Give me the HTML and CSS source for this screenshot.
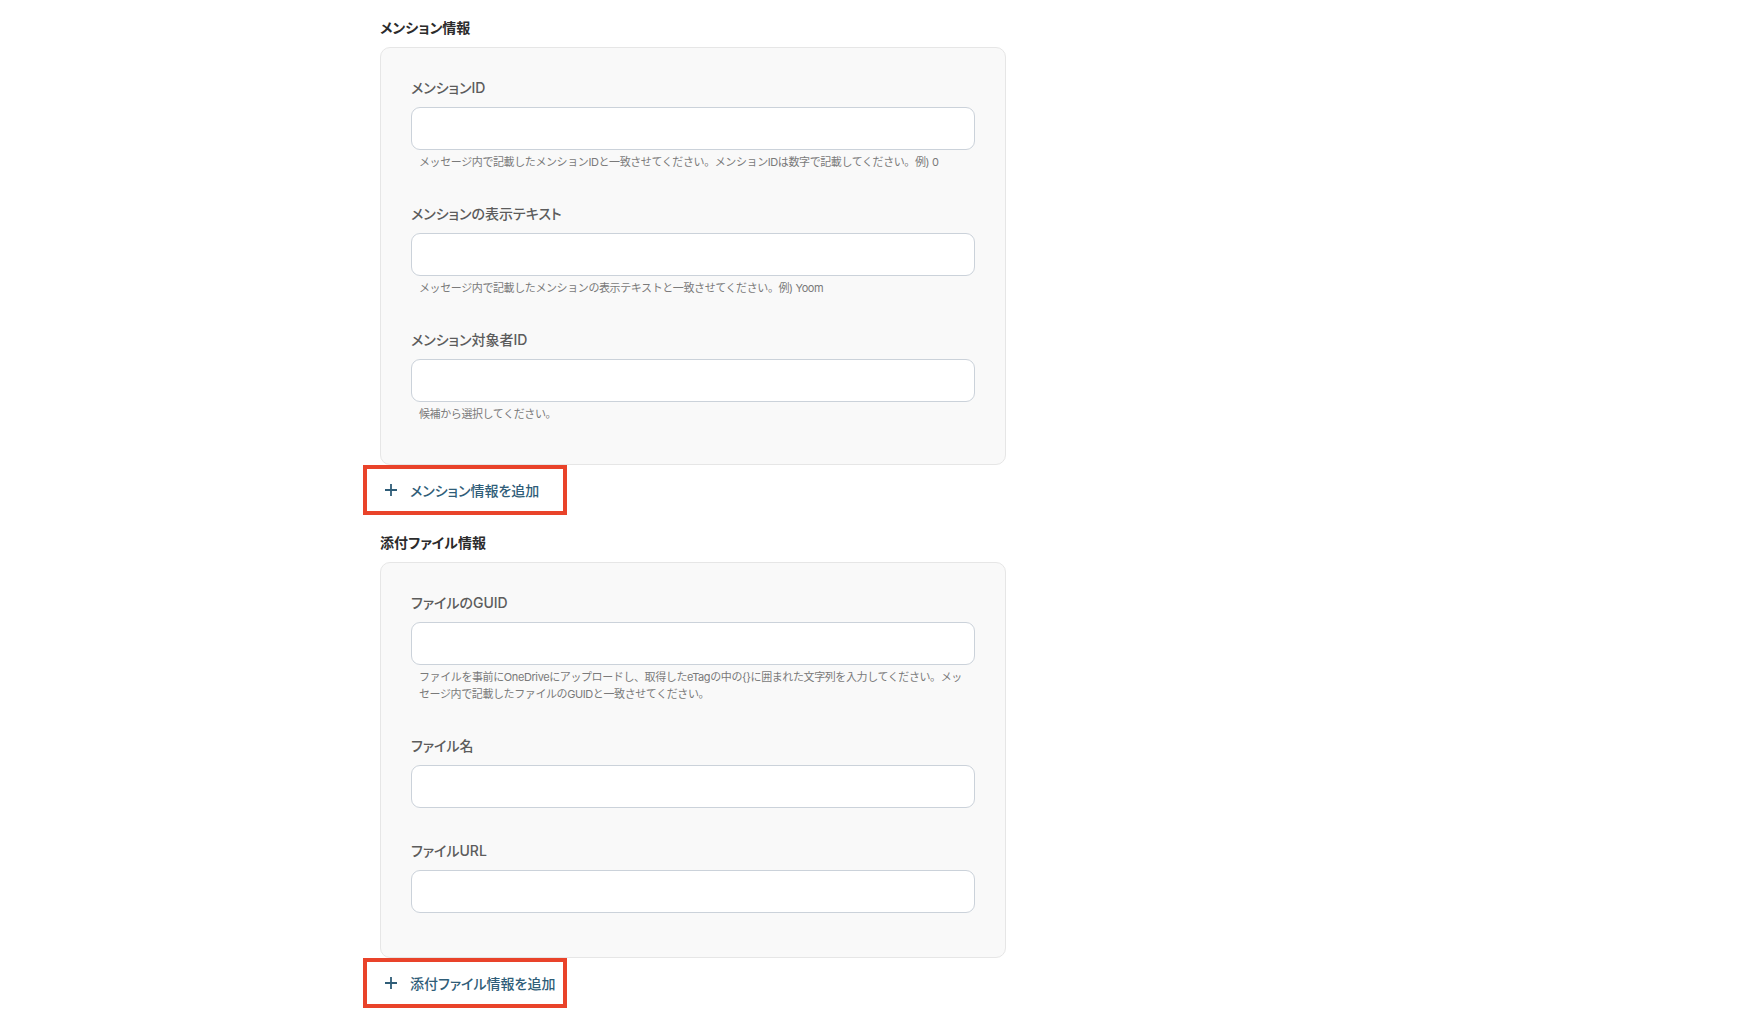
FILE: index.html
```html
<!DOCTYPE html>
<html lang="ja">
<head>
    <meta charset="UTF-8">
    <meta name="viewport" content="width=device-width, initial-scale=1.0">
    <title>メンション・添付ファイル設定</title>
    <link rel="stylesheet" href="styles.css">
</head>
<body>
    <div class="page">
        <!-- mention block -->
        <section class="group">
            <h3 class="group-title">メンション情報</h3>
            <div class="group-box">
                <div class="field">
                    <label class="field-label">メンションID</label>
                    <input class="field-input" type="text">
                    <p class="field-help">メッセージ内で記載したメンションIDと一致させてください。メンションIDは数字で記載してください。例) 0</p>
                </div>
                <div class="field">
                    <label class="field-label">メンションの表示テキスト</label>
                    <input class="field-input" type="text">
                    <p class="field-help">メッセージ内で記載したメンションの表示テキストと一致させてください。例) Yoom</p>
                </div>
                <div class="field">
                    <label class="field-label">メンション対象者ID</label>
                    <input class="field-input" type="text">
                    <p class="field-help">候補から選択してください。</p>
                </div>
            </div>
            <div class="add-mark">
                <button class="add-btn">
                    <svg class="plus" width="14" height="14" viewBox="0 0 14 14"><path d="M7 1v12M1 7h12" stroke="currentColor" stroke-width="1.8" fill="none"/></svg>
                    メンション情報を追加
                </button>
            </div>
        </section>

        <!-- attachment block -->
        <section class="group">
            <h3 class="group-title">添付ファイル情報</h3>
            <div class="group-box group-box--tail">
                <div class="field">
                    <label class="field-label">ファイルのGUID</label>
                    <input class="field-input" type="text">
                    <p class="field-help">ファイルを事前にOneDriveにアップロードし、取得したeTagの中の{}に囲まれた文字列を入力してください。メッセージ内で記載したファイルのGUIDと一致させてください。</p>
                </div>
                <div class="field">
                    <label class="field-label">ファイル名</label>
                    <input class="field-input" type="text">
                </div>
                <div class="field">
                    <label class="field-label">ファイルURL</label>
                    <input class="field-input" type="text">
                </div>
            </div>
            <div class="add-mark">
                <button class="add-btn">
                    <svg class="plus" width="14" height="14" viewBox="0 0 14 14"><path d="M7 1v12M1 7h12" stroke="currentColor" stroke-width="1.8" fill="none"/></svg>
                    添付ファイル情報を追加
                </button>
            </div>
        </section>
    </div>
</body>
</html>
```

FILE: styles.css
```css
:root{
    --title: #2b2b2b;
    --label: #5c5c5c;
    --help: #7a7a7a;
    --box-bg: #f9f9f9;
    --box-line: #e6e6e6;
    --input-line: #cbd2da;
    --link: #2f5d78;
    --mark: #e9432a;
}
*{
    margin: 0;
    padding: 0;
    box-sizing: border-box;
}
body{
    background: #fff;
    font-family: Inter, "Noto Sans CJK JP", sans-serif;
    color: var(--title);
}
.page{
    padding: 18px 0 0 380px;
}
.group{
    width: 626px;
}
.group + .group{
    margin-top: 18px;
}
.group-title{
    font-size: 14px;
    line-height: 20px;
    font-weight: 700;
    color: var(--title);
    margin-bottom: 9px;
    font-feature-settings: "palt";
}
.group-box{
    background: var(--box-bg);
    border: 1px solid var(--box-line);
    border-radius: 10px;
    padding: 30px 30px 41px;
    display: flex;
    flex-direction: column;
    gap: 33px;
}
.group-box--tail{
    padding-bottom: 44px;
}
.field{
    display: flex;
    flex-direction: column;
}
.field-label{
    font-size: 14px;
    line-height: 20px;
    font-weight: 500;
    color: var(--label);
    margin-bottom: 9px;
    font-feature-settings: "palt";
}
.field-input{
    height: 43px;
    width: 100%;
    background: #fff;
    border: 1px solid var(--input-line);
    border-radius: 9px;
    padding: 0 12px;
    font: inherit;
}
.field-help{
    margin-top: 4px;
    padding: 0 8px;
    font-size: 11px;
    line-height: 17px;
    letter-spacing: -0.4px;
    color: var(--help);
}
.add-mark{
    margin-left: -17px;
    width: 204px;
    border: 4px solid var(--mark);
}
.add-btn{
    display: flex;
    align-items: center;
    gap: 12px;
    height: 42px;
    padding-left: 17px;
    background: none;
    border: none;
    cursor: pointer;
    font-family: inherit;
    font-size: 14px;
    font-weight: 500;
    color: var(--link);
    font-feature-settings: "palt";
}
.plus{
    flex: none;
}
```
